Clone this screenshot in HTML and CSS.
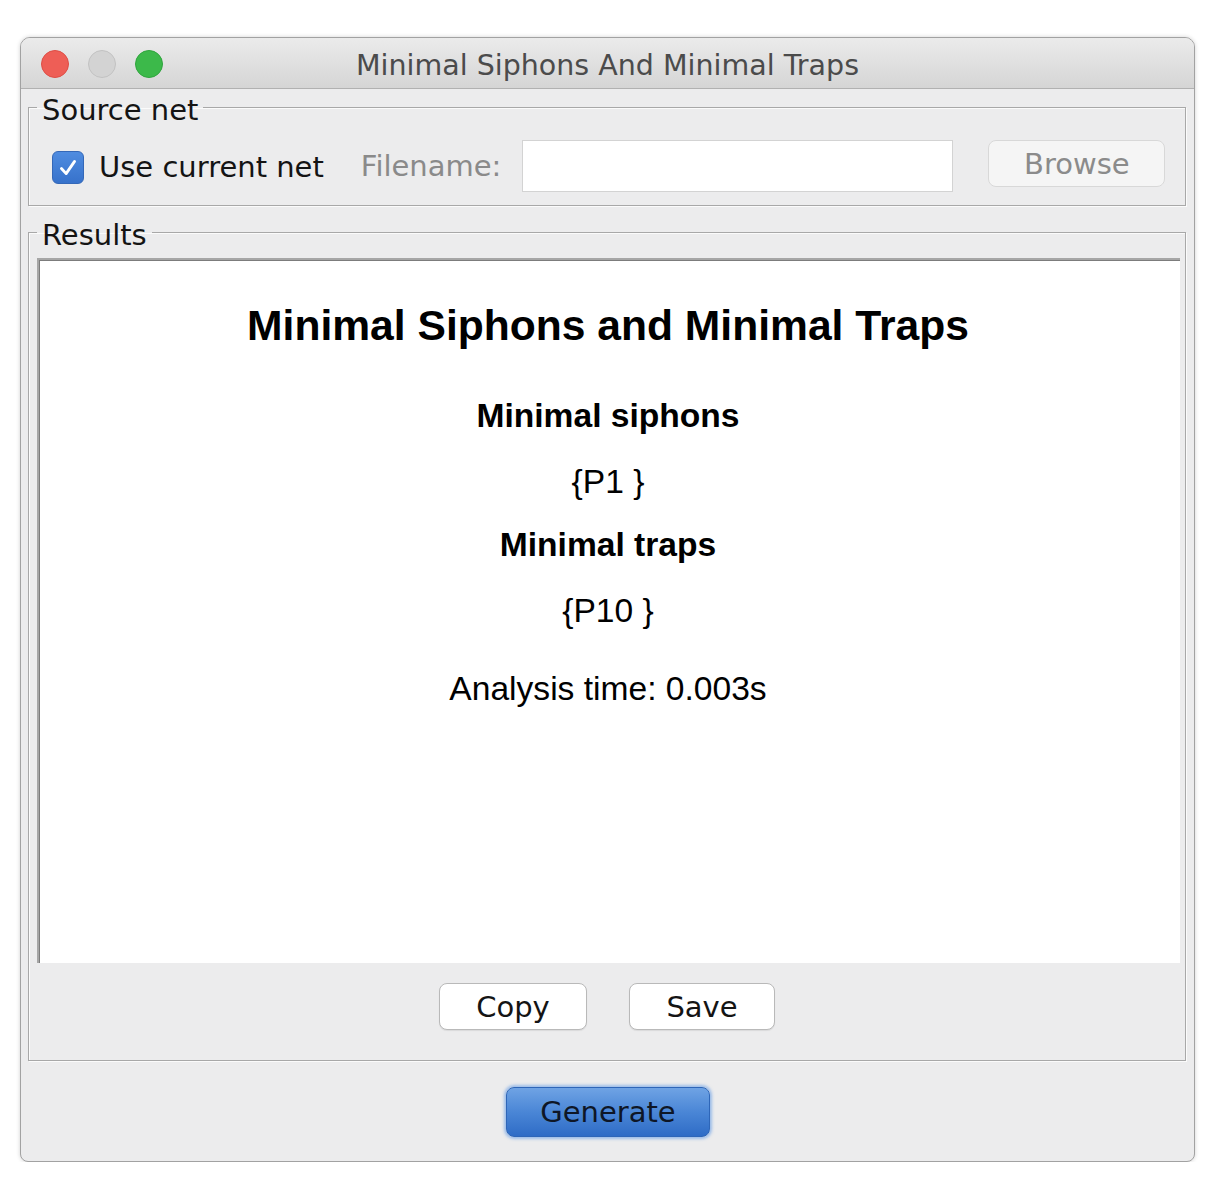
FILE: index.html
```html
<!DOCTYPE html>
<html>
<head>
<meta charset="utf-8">
<title>Minimal Siphons And Minimal Traps</title>
<link rel="stylesheet" href="styles.css">
</head>
<body>
<div class="window">
  <div class="titlebar">
    <div class="lights">
      <span class="light red"></span>
      <span class="light idle"></span>
      <span class="light green"></span>
    </div>
    <div class="title">Minimal Siphons And Minimal Traps</div>
    <div class="spacer"></div>
  </div>
  <div class="content">
    <fieldset class="group source">
      <legend>Source net</legend>
      <div class="source-row">
        <div class="check">
          <span class="box"><svg width="32" height="33" viewBox="0 0 32 33"><path d="M9 17.5 L14 23 L23 10" fill="none" stroke="#ffffff" stroke-width="3" stroke-linecap="round" stroke-linejoin="round"/></svg></span>
          <span class="check-label">Use current net</span>
        </div>
        <span class="fname">Filename:</span>
        <span class="field"></span>
        <span class="btn browse">Browse</span>
      </div>
    </fieldset>
    <fieldset class="group results">
      <legend>Results</legend>
      <div class="pane">
        <div class="r-title">Minimal Siphons and Minimal Traps</div>
        <div class="r-head first">Minimal siphons</div>
        <div class="r-set">{P1 }</div>
        <div class="r-head">Minimal traps</div>
        <div class="r-set">{P10 }</div>
        <div class="r-time">Analysis time: 0.003s</div>
      </div>
      <div class="actions">
        <span class="btn plain copy">Copy</span>
        <span class="btn plain save">Save</span>
      </div>
    </fieldset>
    <div class="footer">
      <span class="btn primary">Generate</span>
    </div>
  </div>
</div>
</body>
</html>
```

FILE: styles.css
```css
html, body {
  margin: 0;
  padding: 0;
  background: #ffffff;
}

body {
  font-family: "DejaVu Sans", "Liberation Sans", sans-serif;
}

.window {
  box-sizing: border-box;
  margin: 37px 0 0 20px;
  width: 1175px;
  height: 1125px;
  border: 1px solid #a2a2a2;
  border-radius: 10px 10px 8px 8px;
  background: #ececed;
  box-shadow: 0 0 4px rgba(0, 0, 0, 0.18);
  display: flex;
  flex-direction: column;
  overflow: hidden;
}

.titlebar {
  box-sizing: border-box;
  height: 51px;
  flex: none;
  border-bottom: 1px solid #b1b1b1;
  background: linear-gradient(#ebebeb, #d5d5d5);
  display: grid;
  grid-template-columns: 1fr auto 1fr;
  grid-template-rows: 50px;
  align-items: center;
}

.lights {
  display: flex;
  gap: 19px;
  padding-left: 20px;
  padding-top: 2px;
}

.light {
  box-sizing: border-box;
  width: 28px;
  height: 28px;
  border-radius: 50%;
}

.light.red {
  background: #ee5e56;
  border: 1px solid #de4d45;
}

.light.idle {
  background: #d3d3d3;
  border: 1px solid #c2c2c2;
}

.light.green {
  background: #3cb94a;
  border: 1px solid #2fa53d;
}

.title {
  font-size: 28.5px;
  color: #4b4b4b;
  line-height: 45px;
  padding-top: 5px;
  white-space: nowrap;
}

.content {
  flex: 1;
  display: flex;
  flex-direction: column;
  padding: 0 8px 0 7px;
}

.group {
  margin: 0;
  padding: 0;
  border: 1px solid #a8a8a8;
  box-shadow: 1px 1px 0 #fbfbfb, inset 1px 1px 0 #fbfbfb;
  min-inline-size: 0;
}

.group legend {
  margin-left: 8px;
  padding: 6px 5px 0 5px;
  font-size: 29px;
  line-height: 28px;
  color: #141414;
}

.source {
  margin-top: 1px;
}

.source-row {
  display: flex;
  align-items: center;
  height: 52px;
  margin: 16px 0 13px 0;
  padding-left: 23px;
}

.check {
  display: flex;
  align-items: center;
  padding-top: 2px;
}

.box {
  box-sizing: border-box;
  width: 32px;
  height: 33px;
  border-radius: 6px;
  background: linear-gradient(#4f8ce0, #3772cb);
  border: 1px solid #3468b8;
  display: flex;
  align-items: center;
  justify-content: center;
}

.box svg {
  display: block;
}

.check-label {
  margin-left: 15px;
  font-size: 29px;
  color: #141414;
}

.fname {
  margin-left: 37px;
  font-size: 29px;
  color: #8a8a8a;
}

.field {
  box-sizing: border-box;
  margin-left: 21px;
  width: 431px;
  height: 52px;
  background: #ffffff;
  border: 1px solid #d3d3d3;
}

.btn {
  box-sizing: border-box;
  display: flex;
  align-items: center;
  justify-content: center;
  font-size: 29px;
  border-radius: 8px;
}

.browse {
  margin-left: 35px;
  width: 177px;
  height: 47px;
  margin-top: -5px;
  background: #f5f5f5;
  border: 1px solid #d8d8d8;
  color: #8b8b8b;
}

.results {
  margin-top: 9px;
}

.pane {
  box-sizing: border-box;
  height: 705px;
  margin: 9px 5px 0 8px;
  background: #ffffff;
  border-top: 2px solid #a6a6a6;
  border-left: 2px solid #a6a6a6;
  box-shadow: inset 1px 1px 0 #7c7c7c;
  padding-top: 40px;
  padding-right: 3px;
  font-family: "Liberation Sans", Arial, sans-serif;
  color: #000000;
  text-align: center;
}

.r-title {
  font-size: 42.6px;
  font-weight: bold;
  line-height: 50px;
}

.r-head {
  font-size: 33.6px;
  font-weight: bold;
  line-height: 40px;
  margin-top: 23px;
}

.r-head.first {
  margin-top: 46px;
}

.r-set {
  font-size: 33.6px;
  line-height: 40px;
  margin-top: 26px;
}

.r-time {
  font-size: 33.6px;
  line-height: 40px;
  margin-top: 38px;
}

.actions {
  display: flex;
  justify-content: center;
  gap: 42px;
  margin: 20px 0 30px 0;
}

.plain {
  height: 47px;
  background: #ffffff;
  border: 1px solid #b9b9b9;
  color: #141414;
  box-shadow: 0 1px 1px rgba(0, 0, 0, 0.08);
}

.copy {
  width: 148px;
}

.save {
  width: 146px;
}

.footer {
  display: flex;
  justify-content: center;
  padding-top: 26px;
  padding-left: 2px;
}

.primary {
  width: 204px;
  height: 50px;
  background: linear-gradient(#6fa3e4, #4a86d6 50%, #2f6cc6);
  border: 1px solid #2e66b8;
  color: #0e1626;
  box-shadow: 0 0 3px 2px rgba(90, 150, 230, 0.55);
}
```
